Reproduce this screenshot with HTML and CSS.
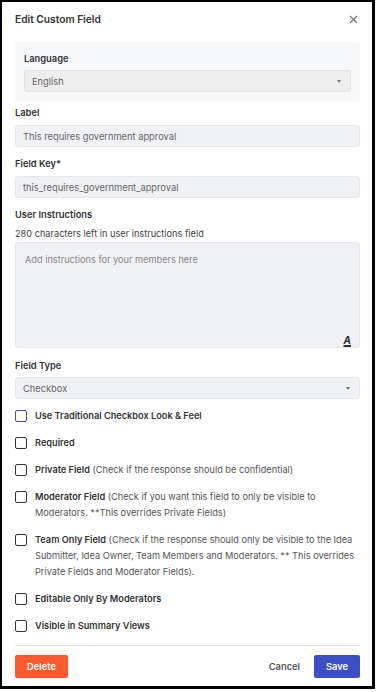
FILE: index.html
```html
<!DOCTYPE html>
<html lang="en">
<head>
    <meta charset="UTF-8">
    <meta name="viewport" content="width=device-width, initial-scale=1.0">
    <title>Edit Custom Field</title>
    <link rel="stylesheet" href="styles.css">
</head>
<body>
    <div class="modal">
        <div class="modal-header">
            <h1>Edit Custom Field</h1>
            <button class="close" aria-label="Close">
                <svg width="9" height="9" viewBox="0 0 9 9"><path d="M1 1L8 8M8 1L1 8" stroke="#777" stroke-width="1.2"/></svg>
            </button>
        </div>

        <div class="lang-box">
            <label class="field-label">Language</label>
            <div class="select lang-select">
                <span>English</span>
                <span class="caret"></span>
            </div>
        </div>

        <label class="field-label">Label</label>
        <div class="input">This requires government approval</div>

        <label class="field-label">Field Key*</label>
        <div class="input">this_requires_government_approval</div>

        <label class="field-label">User Instructions</label>
        <p class="help">280 characters left in user instructions field</p>
        <div class="textarea">
            <span class="placeholder">Add instructions for your members here</span>
            <span class="format-icon">A</span>
        </div>

        <label class="field-label type-label">Field Type</label>
        <div class="select">
            <span>Checkbox</span>
            <span class="caret"></span>
        </div>

        <ul class="checks">
            <li><span class="box focus"></span><p><b>Use Traditional Checkbox Look &amp; Feel</b></p></li>
            <li><span class="box"></span><p><b>Required</b></p></li>
            <li><span class="box"></span><p><b>Private Field</b> (Check if the response should be confidential)</p></li>
            <li><span class="box"></span><p><b>Moderator Field</b> (Check if you want this field to only be visible to Moderators. **This overrides Private Fields)</p></li>
            <li><span class="box"></span><p><b>Team Only Field</b> (Check if the response should only be visible to the Idea Submitter, Idea Owner, Team Members and Moderators. ** This overrides Private Fields and Moderator Fields).</p></li>
            <li><span class="box"></span><p><b>Editable Only By Moderators</b></p></li>
            <li><span class="box"></span><p><b>Visible in Summary Views</b></p></li>
        </ul>

        <div class="footer">
            <button class="btn delete">Delete</button>
            <div class="right">
                <button class="btn cancel">Cancel</button>
                <button class="btn save">Save</button>
            </div>
        </div>
    </div>
</body>
</html>
```

FILE: styles.css
```css
* {
    box-sizing: border-box;
}
body {
    margin: 0;
    font-family: Inter, "Noto Sans", sans-serif;
    color: #333;
    background: #fff;
}
.modal {
    width: 375px;
    height: 689px;
    border: 2px solid #000;
    border-bottom-width: 3px;
    border-right-width: 3px;
    padding: 0 12px 0 13px;
    box-shadow: 0 2px 0 0 #fff, 0 3px 0 0 #888;
}
.modal-header {
    display: flex;
    justify-content: space-between;
    align-items: center;
    height: 34px;
    padding-right: 2px;
}
h1 {
    margin: 0;
    font-size: 10.2px;
    font-weight: 600;
    color: #333;
}
.close {
    border: 0;
    background: none;
    padding: 0;
    display: flex;
}
.lang-box {
    margin-top: 6px;
    background: #f7f8fa;
    border-radius: 3px;
    padding: 10px 9px 9px;
}
.field-label {
    display: block;
    font-size: 9.3px;
    font-weight: 600;
    color: #333;
    line-height: 13px;
    margin: 0 0 6px;
}
.lang-box .field-label {
    margin-bottom: 5px;
}
.select, .input {
    height: 22px;
    border-radius: 3px;
    border: 1px solid #e6e7ea;
    background: #f0f1f4;
    font-size: 9.3px;
    color: #666;
    display: flex;
    align-items: center;
    padding: 0 7px;
}
.select {
    justify-content: space-between;
}
.lang-select {
    background: #eeeeef;
    border-color: #e3e3e5;
}
.caret {
    width: 0;
    height: 0;
    border-left: 2px solid transparent;
    border-right: 2px solid transparent;
    border-top: 3px solid #777;
    margin-right: 2px;
}
.lang-box + .field-label {
    margin-top: 5px;
}
.lang-box + .field-label {
    margin-bottom: 6px;
}
.input {
    margin-bottom: 10px;
}
.help {
    margin: 0 0 2px;
    font-size: 9.2px;
    line-height: 13px;
    color: #444;
}
.textarea {
    height: 106px;
    background: #f0f1f4;
    border: 1px solid #e6e7ea;
    border-radius: 3px;
    padding: 11px 9px 0;
    display: flex;
    flex-direction: column;
    justify-content: space-between;
}
.placeholder {
    font-size: 9.2px;
    color: #888;
}
.format-icon {
    align-self: flex-end;
    font-size: 10px;
    font-weight: 700;
    font-style: italic;
    text-decoration: underline;
    text-decoration-thickness: 1.5px;
    color: #333;
    margin: 0 -1px 1px 0;
}
.type-label {
    margin-top: 11px;
    margin-bottom: 5px;
}
.checks {
    list-style: none;
    margin: 9px 0 0;
    padding: 0;
}
.checks li {
    display: flex;
    gap: 8px;
    margin-bottom: 11px;
}
.checks p {
    margin: 0;
    font-size: 9.2px;
    line-height: 16px;
    color: #555;
}
.checks b {
    font-weight: 600;
    color: #333;
}
.box {
    flex: none;
    width: 12px;
    height: 12px;
    margin-top: 2px;
    border: 1.5px solid #333;
    border-radius: 2px;
}
.box.focus {
    border-color: #3a4dbf;
}
.footer {
    border-top: 1px solid #e4e4e4;
    margin-top: 2px;
    padding-top: 9px;
    display: flex;
    justify-content: space-between;
}
.right {
    display: flex;
    align-items: center;
    gap: 14px;
}
.btn {
    font-family: inherit;
    font-size: 9.3px;
    font-weight: 600;
    border: 0;
    border-radius: 2px;
    height: 23px;
    color: #fff;
    cursor: pointer;
}
.delete {
    width: 53px;
    background: #ff5a2d;
}
.save {
    width: 46px;
    background: #3d4fc6;
}
.cancel {
    background: none;
    color: #555;
    padding: 0;
}
```
